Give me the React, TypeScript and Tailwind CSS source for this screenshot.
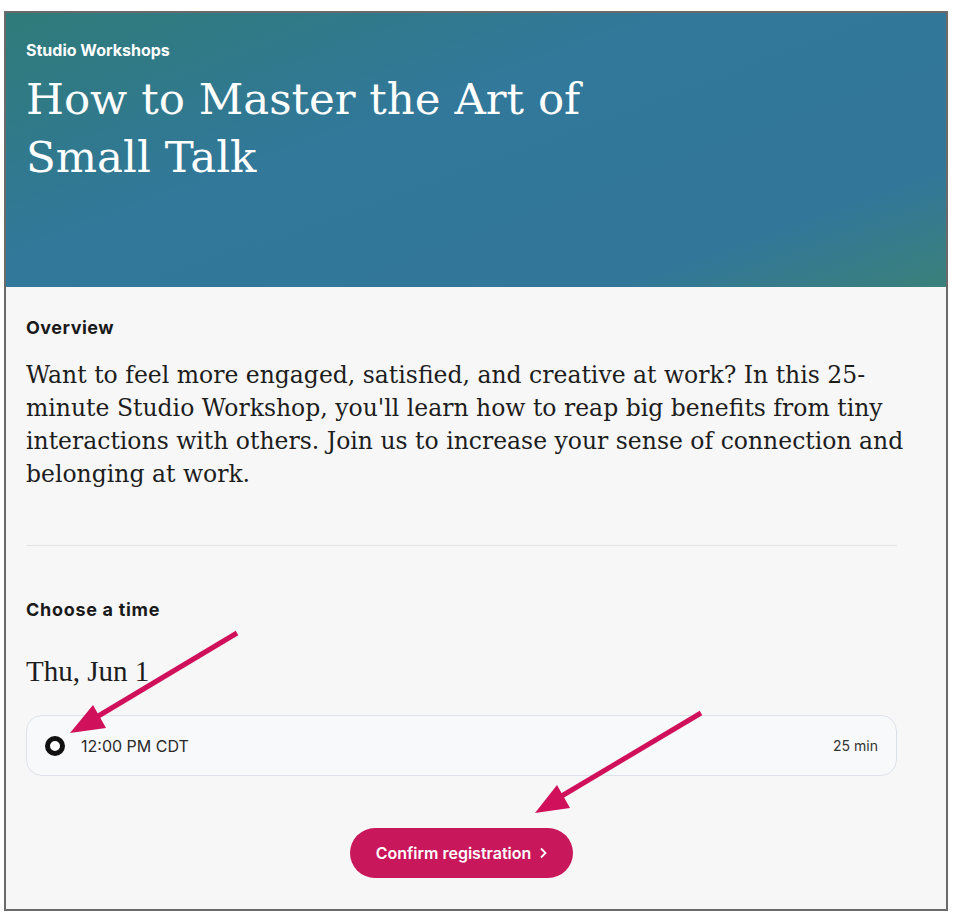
const sans = "font-['Inter','Liberation_Sans',sans-serif]";
const serif = "font-['DejaVu_Serif','Liberation_Serif',serif]";
const timesSerif = "font-['Liberation_Serif','DejaVu_Serif',serif]";

const Arrows = () => (
  <svg
    className="absolute inset-0 pointer-events-none"
    width="953"
    height="919"
    viewBox="0 0 953 919"
  >
    <g stroke="#d0105a" strokeWidth="5" fill="#d0105a">
      <line x1="237" y1="633" x2="95" y2="718" />
      <polygon points="70,733 93,705 106,728" stroke="none" />
      <line x1="701" y1="713" x2="560" y2="797" />
      <polygon points="535,813 557,785 570,808" stroke="none" />
    </g>
  </svg>
);

const App = () => {
  return (
    <div className={`relative w-[953px] h-[919px] bg-white pt-[11px] pl-[4px] ${sans}`}>
      <div className="w-[944px] h-[900px] border-2 border-[#6a6a6a] bg-[#f7f7f7] flex flex-col">
        <div className="h-[274px] bg-[linear-gradient(160deg,#2f7b79_0%,#31789a_40%,#32779a_80%,#3a807a_100%)] px-5 pt-[27px]">
          <div className="text-white font-bold text-[16px] leading-5">Studio Workshops</div>
          <h1 className={`${serif} text-white text-[43.5px] leading-[58px] mt-[10px] whitespace-nowrap`}>
            How to Master the Art of
            <br />
            Small Talk
          </h1>
        </div>

        <div className="px-5 pt-[29px]">
          <div className="text-[#1a1a1a] font-bold text-[18px] tracking-[0.5px] leading-6">Overview</div>
          <p className={`${serif} text-[#1d1d1d] text-[23.5px] leading-[33px] mt-[19px] whitespace-nowrap`}>
            Want to feel more engaged, satisfied, and creative at work? In this 25-
            <br />
            minute Studio Workshop, you'll learn how to reap big benefits from tiny
            <br />
            interactions with others. Join us to increase your sense of connection and
            <br />
            belonging at work.
          </p>

          <div className="h-px bg-[#e3e3e3] mt-[54px] mr-[29px]" />

          <div className="text-[#1a1a1a] font-bold text-[18px] tracking-[0.7px] leading-6 mt-[52px]">Choose a time</div>
          <div className={`${timesSerif} text-[#1d1d1d] text-[29px] leading-8 mt-[33px]`}>Thu, Jun 1</div>

          <div className="mt-[28px] mr-[29px] h-[61px] rounded-2xl border border-[#dde2ea] bg-[#f8f9fa] flex items-center px-[18px]">
            <span className="w-[20px] h-[20px] rounded-full border-[5px] border-[#111111] bg-white" />
            <span className="ml-[16px] text-[16px] text-[#2a2a2a]">12:00 PM CDT</span>
            <span className="ml-auto text-[14px] text-[#333333]">25 min</span>
          </div>

          <div className="flex justify-center mt-[52px] mr-[29px]">
            <button className="h-[50px] px-[26px] rounded-full bg-[#c8175a] text-white font-semibold text-[16px] flex items-center gap-[8px]">
              Confirm registration
              <svg width="8" height="12" viewBox="0 0 8 12" fill="none" stroke="white" strokeWidth="1.8">
                <path d="M2 1.5 L6.5 6 L2 10.5" />
              </svg>
            </button>
          </div>
        </div>
      </div>
      <Arrows />
    </div>
  );
};

export default App;
